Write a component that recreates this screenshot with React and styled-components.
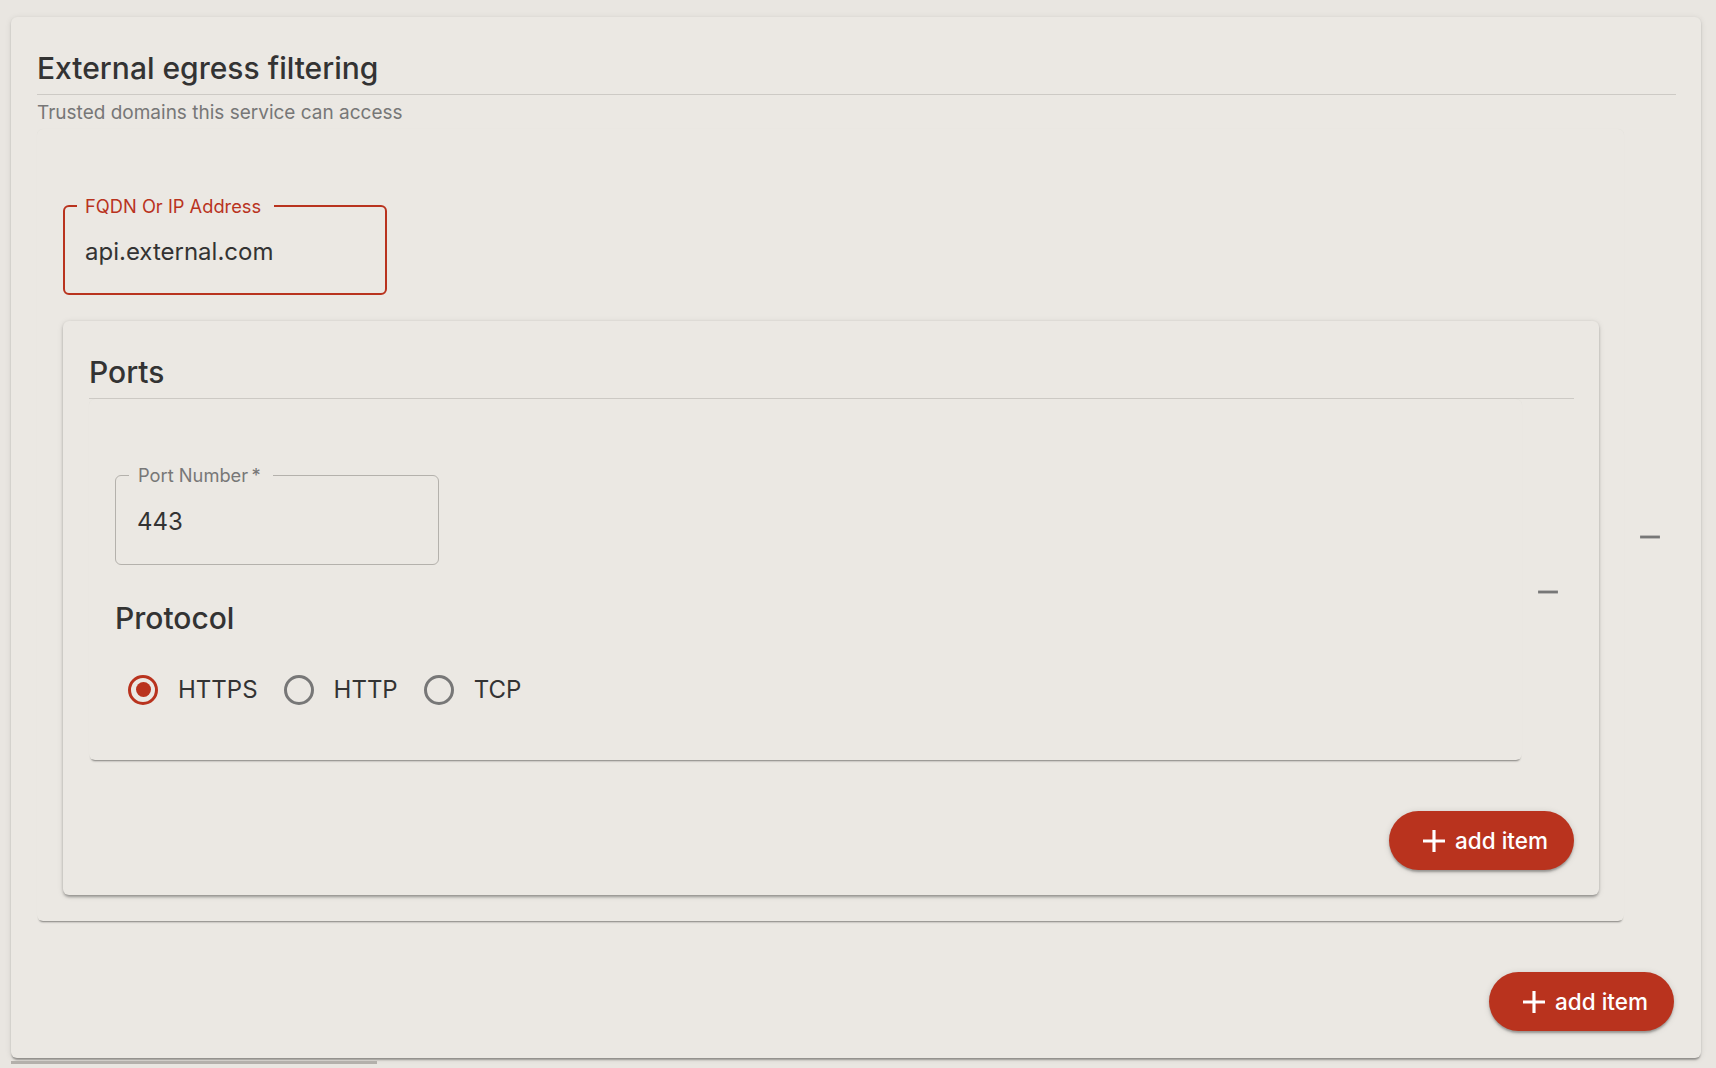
import React from 'react';
import styled, { createGlobalStyle } from 'styled-components';

const GlobalStyle = createGlobalStyle`
  body {
    margin: 0;
    background: #e9e6e1;
    font-family: Inter, "Noto Sans", sans-serif;
    color: #333;
  }
`;

const RED = '#b9331e';
const BG = '#ebe8e3';

const Page = styled.div`
  padding: 17px 15px 0 11px;
  width: 1690px;
`;

const Card = styled.div`
  background: ${BG};
  border-radius: 6px;
  padding: 32px 25px 27px 26px;
  box-shadow: 0 3px 2px -1px rgba(0, 0, 0, 0.28), 0 1px 2px 0 rgba(0, 0, 0, 0.12),
    0 1px 6px 0 rgba(0, 0, 0, 0.1);
`;

const SectionTitle = styled.h2`
  margin: 0;
  font-size: 30px;
  font-weight: 500;
  line-height: 38px;
  color: #333;
  padding-bottom: 7px;
  border-bottom: 1.5px solid #cdcac5;
`;

const Subtitle = styled.p`
  margin: 4px 0 3px;
  font-size: 19px;
  line-height: 27px;
  color: #777;
`;

const ItemRow = styled.div`
  display: flex;
  align-items: center;
`;

const ItemPaper = styled.div`
  flex: 1;
  background: ${BG};
  border-radius: 6px;
  padding: ${(p) => p.$pad};
  box-shadow: 0 3px 2px -2px rgba(0, 0, 0, 0.45), 0 0 1px rgba(0, 0, 0, 0.05);
`;

const RemoveButton = styled.button`
  width: 52px;
  height: 52px;
  margin-top: 24px;
  border: 0;
  background: none;
  padding: 0;
  display: flex;
  align-items: center;
  justify-content: center;
  cursor: pointer;
  svg { fill: #777; }
`;

const Field = styled.div`
  position: relative;
  width: 324px;
  height: 90px;
  box-sizing: border-box;
  border: ${(p) => (p.$focused ? `2px solid ${RED}` : '1px solid #b4b1ac')};
  border-radius: 6px;
  display: flex;
  align-items: center;
  padding: 3px 0 0 ${(p) => (p.$focused ? '20px' : '21px')};
  font-size: 24px;
  color: #333;
`;

const FieldLabel = styled.span`
  position: absolute;
  top: -12px;
  left: ${(p) => (p.$focused ? '12px' : '13px')};
  padding: ${(p) => (p.$focused ? '0 13px 0 8px' : '0 12px 0 9px')};
  background: ${BG};
  font-size: 18.3px;
  line-height: 22px;
  color: ${(p) => (p.$focused ? RED : '#777')};
`;

const NestedCard = styled.div`
  margin-top: 26px;
  background: ${BG};
  border-radius: 6px;
  padding: 32px 25px 25px 26px;
  box-shadow: 0 3px 3px -1px rgba(0, 0, 0, 0.25), 0 1px 3px 0 rgba(0, 0, 0, 0.14),
    0 1px 6px 0 rgba(0, 0, 0, 0.1);
`;

const GroupLabel = styled.div`
  margin-top: 34px;
  font-size: 30px;
  font-weight: 500;
  line-height: 38px;
  color: #333;
`;

const RadioRow = styled.div`
  display: flex;
  align-items: center;
  height: 63px;
  margin-top: 21px;
  padding-left: 13px;
  gap: 26px;
`;

const RadioLabel = styled.label`
  display: flex;
  align-items: center;
  gap: 20px;
  font-size: 24px;
  color: #333;
`;

const RadioCircle = styled.span`
  width: 30px;
  height: 30px;
  box-sizing: border-box;
  border-radius: 50%;
  border: 3px solid ${(p) => (p.$checked ? RED : '#777')};
  display: flex;
  align-items: center;
  justify-content: center;

  &::after {
    content: '';
    width: 15px;
    height: 15px;
    border-radius: 50%;
    background: ${RED};
    display: ${(p) => (p.$checked ? 'block' : 'none')};
  }
`;

const Actions = styled.div`
  display: flex;
  justify-content: flex-end;
  margin-top: 51px;
  padding-right: ${(p) => p.$inset || 0};
`;

const AddButton = styled.button`
  display: inline-flex;
  align-items: center;
  gap: 10px;
  height: 59px;
  padding: 0 26px 0 34px;
  border: 0;
  border-radius: 30px;
  background: ${RED};
  color: #fff;
  font-family: inherit;
  font-size: 22.5px;
  font-weight: 500;
  cursor: pointer;
  box-shadow: 0 3px 2px -1px rgba(0, 0, 0, 0.2), 0 2px 3px 0 rgba(0, 0, 0, 0.14),
    0 1px 7px 0 rgba(0, 0, 0, 0.12);
  svg { fill: #fff; }
`;

const ScrollStrip = styled.div`
  width: 366px;
  height: 3px;
  margin-top: 3px;
  background: #b3b0ab;
`;

const MinusIcon = () => (
  <svg width="34" height="34" viewBox="0 0 24 24">
    <path d="M19 13H5v-2h14v2z" />
  </svg>
);

const PlusIcon = () => (
  <svg width="22" height="22" viewBox="0 0 14 14">
    <path d="M6 0h2v6h6v2H8v6H6V8H0V6h6z" />
  </svg>
);

const OutlinedField = ({ label, value, focused }) => (
  <Field $focused={focused}>
    <FieldLabel $focused={focused}>{label}</FieldLabel>
    {value}
  </Field>
);

const Radio = ({ label, checked }) => (
  <RadioLabel>
    <RadioCircle $checked={checked} />
    {label}
  </RadioLabel>
);

const AddItem = () => (
  <AddButton>
    <PlusIcon />
    add item
  </AddButton>
);

export default function App() {
  return (
    <Page>
      <GlobalStyle />
      <Card>
        <SectionTitle>External egress filtering</SectionTitle>
        <Subtitle>Trusted domains this service can access</Subtitle>
        <ItemRow>
          <ItemPaper $pad="76px 25px 26px 26px">
            <OutlinedField focused label="FQDN Or IP Address" value="api.external.com" />
            <NestedCard>
              <SectionTitle>Ports</SectionTitle>
              <ItemRow>
                <ItemPaper $pad="76px 26px 39px 26px">
                  <OutlinedField label={'Port Number\u2009*'} value="443" />
                  <GroupLabel>Protocol</GroupLabel>
                  <RadioRow>
                    <Radio label="HTTPS" checked />
                    <Radio label="HTTP" />
                    <Radio label="TCP" />
                  </RadioRow>
                </ItemPaper>
                <RemoveButton aria-label="remove port">
                  <MinusIcon />
                </RemoveButton>
              </ItemRow>
              <Actions>
                <AddItem />
              </Actions>
            </NestedCard>
          </ItemPaper>
          <RemoveButton aria-label="remove domain">
            <MinusIcon />
          </RemoveButton>
        </ItemRow>
        <Actions $inset="2px">
          <AddItem />
        </Actions>
      </Card>
      <ScrollStrip />
    </Page>
  );
}
